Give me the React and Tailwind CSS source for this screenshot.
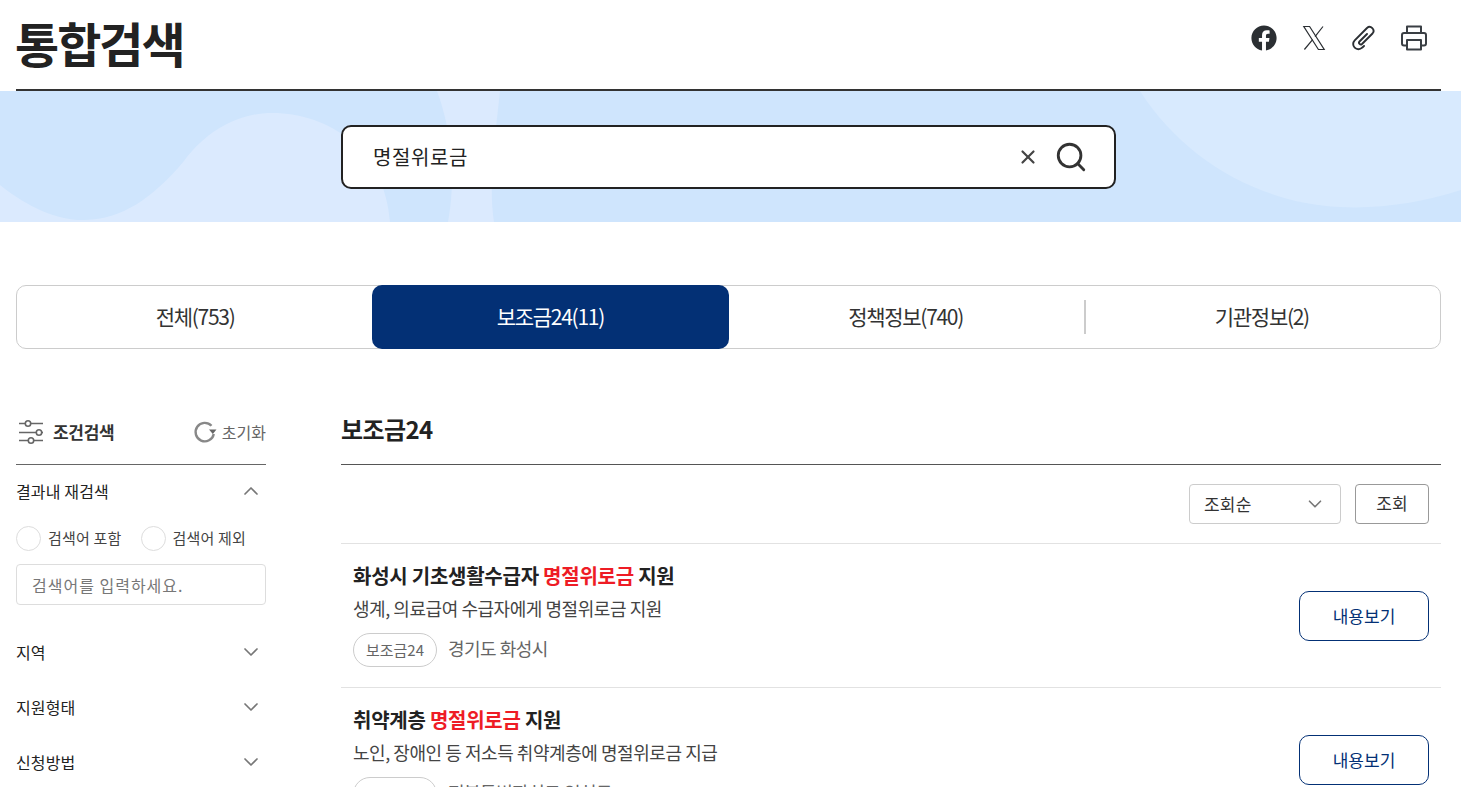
import React from 'react';
import { FaFacebook } from 'react-icons/fa';
import { X, Search, ChevronDown, ChevronUp } from 'lucide-react';

const FONT = 'font-["Noto_Sans_CJK_KR","Noto_Sans",sans-serif]';

const TABS = [
  { label: '전체', count: 753 },
  { label: '보조금24', count: 11, active: true },
  { label: '정책정보', count: 740 },
  { label: '기관정보', count: 2 },
];

const RESULTS = [
  { before: '화성시 기초생활수급자 ', desc: '생계, 의료급여 수급자에게 명절위로금 지원', region: '경기도 화성시' },
  { before: '취약계층 ', desc: '노인, 장애인 등 저소득 취약계층에 명절위로금 지급', region: '전북특별자치도 임실군' },
];

function XLogo() {
  return (
    <svg width="24" height="26" viewBox="0 0 24 26" fill="none" stroke="#2b2f33" strokeWidth="1.2">
      <path d="M1.8 1.5h5.8l14.6 23h-5.8z" />
      <path d="M21 1.5l-8 10.2M10.6 14.6L2.4 24.5" />
    </svg>
  );
}

function ClipIcon() {
  return (
    <svg width="26" height="26" viewBox="0 0 26 26" fill="none" stroke="#2b2f33" strokeWidth="1.9" strokeLinecap="round" strokeLinejoin="round">
      <path d="M16 9L8.500 16.500a1.770 1.770 0 0 0 2.500 2.500L21.500 8.500a3.900 3.900 0 0 0-5.500-5.500L3.700 15.300a5.200 5.200 0 0 0 7.400 7.400L13 21" />
    </svg>
  );
}

function PrinterIcon() {
  return (
    <svg width="26" height="26" viewBox="0 0 26 26" fill="none" stroke="#3a3f44" strokeWidth="2" strokeLinejoin="round">
      <path d="M6 8V1.5h14V8" />
      <path d="M6 20.5H3a2 2 0 0 1-2-2V10a2 2 0 0 1 2-2h20a2 2 0 0 1 2 2v8.500a2 2 0 0 1-2 2h-3" />
      <path d="M6 15h14v9.500H6z" />
    </svg>
  );
}

function FilterIcon() {
  return (
    <svg width="26" height="24" viewBox="0 0 26 24" fill="none" stroke="#666" strokeWidth="1.6" className="ml-[2px] mr-[9px]">
      <path d="M1 3.500h6M13 3.500h12M1 12.500h17M24 12.500h1M1 20.500h9M16 20.500h9" />
      <circle cx="10" cy="3.500" r="2.700" />
      <circle cx="21" cy="12.500" r="2.700" />
      <circle cx="13" cy="20.500" r="2.700" />
    </svg>
  );
}

function ResetIcon() {
  return (
    <svg width="24" height="24" viewBox="0 0 24 24" fill="none" className="mr-[5px]">
      <path d="M18.500 5.800A9.200 9.200 0 1 0 20.800 14" stroke="#888" strokeWidth="2.400" />
      <path d="M16 9.500h7.500l-3.700 4.500z" fill="#666" />
    </svg>
  );
}

function Header() {
  return (
    <div className="flex items-center justify-between h-[91px] ml-4 mr-5 border-b-2 border-[#333]">
      <h1 className="text-[48px] font-bold text-[#222] tracking-[-2px] leading-none -mt-[6px] -ml-px">통합검색</h1>
      <div className="flex items-center gap-6 pr-[14px] -mt-[14px] text-[#2b2f33]">
        <span className="flex justify-center w-[26px]"><FaFacebook size={26} /></span>
        <span className="flex justify-center w-[26px]"><XLogo /></span>
        <span className="flex justify-center w-[26px]"><ClipIcon /></span>
        <span className="flex justify-center w-[26px]"><PrinterIcon /></span>
      </div>
    </div>
  );
}

function SearchBand() {
  return (
    <div className="relative h-[131px] bg-[#cfe5fd] flex justify-center overflow-hidden">
      <svg className="absolute inset-0" width="1461" height="131" viewBox="0 0 1461 131">
        <path d="M0 94C30 118 60 130 85 129C122 128 152 108 184 70C208 38 240 22 272 22C330 22 385 60 390 131H0Z" fill="#dbeafe" />
        <path d="M437 0H500C496 40 488 90 494 131H448C456 90 452 40 437 0Z" fill="#dbeafe" />
        <path d="M1140 0H1461V99C1420 112 1380 118 1340 116C1260 112 1185 70 1140 0Z" fill="#d8eafe" />
      </svg>
      <div className="relative mt-[34px] ml-[-4px] flex items-center w-[775px] h-[64px] bg-white border-2 border-[#222] rounded-[10px] pl-[30px] pr-[26px]">
        <span className="flex-1 text-[20px] text-[#222] tracking-[0.6px]">명절위로금</span>
        <X size={22} strokeWidth={2.4} className="text-[#444] mr-[15px]" />
        <Search size={34} strokeWidth={2} className="text-[#333]" />
      </div>
    </div>
  );
}

function Tabs() {
  return (
    <div className="ml-4 mr-5 mt-[63px] h-[64px] flex border border-[#ccc] rounded-[10px]">
      {TABS.map((t, i) => (
        <div key={t.label} className={`flex-1 flex items-center justify-center text-[21px] tracking-[-1.3px] ${t.active ? 'bg-[#033075] text-white rounded-[10px] -my-px -mx-px' : 'text-[#333]'} ${i === 3 ? 'relative' : ''}`}>
          {i === 3 && <span className="absolute left-0 top-[14px] bottom-[14px] w-[2px] bg-[#ccc]" />}
          {t.label}({t.count})
        </div>
      ))}
    </div>
  );
}

function FilterRow({ label, open }) {
  const Icon = open ? ChevronUp : ChevronDown;
  return (
    <div className={`flex items-center justify-between h-[55px] text-[16px] text-[#222] tracking-[0.15px] ${open ? '-mt-[2px]' : ''}`}>
      {label}
      <Icon size={24} strokeWidth={1.7} className="text-[#777] mr-[3px]" />
    </div>
  );
}

function Sidebar() {
  return (
    <aside className="w-[250px] shrink-0">
      <div className="flex items-center h-[72px] pt-[6px] border-b border-[#666]">
        <FilterIcon />
        <span className="flex-1 text-[17px] font-bold text-[#333] tracking-[-0.3px]">조건검색</span>
        <ResetIcon />
        <span className="text-[16px] text-[#666]">초기화</span>
      </div>
      <FilterRow label="결과내 재검색" open />
      <div className="flex items-center h-[26px] mt-[7px] text-[15px] text-[#444] tracking-[0.2px]">
        <span className="w-[25px] h-[25px] rounded-full border border-[#ddd] mr-[7px]" />
        <span className="mr-[19px]">검색어 포함</span>
        <span className="w-[25px] h-[25px] rounded-full border border-[#ddd] mr-[7px]" />
        <span>검색어 제외</span>
      </div>
      <div className="flex items-center mt-[13px] mb-[19px] h-[41px] border border-[#ddd] rounded-[4px] pl-[15px] text-[16px] text-[#777] tracking-[1px]">검색어를 입력하세요.</div>
      <FilterRow label="지역" />
      <FilterRow label="지원형태" />
      <FilterRow label="신청방법" />
    </aside>
  );
}

function ResultItem({ item }) {
  return (
    <div className="flex items-center justify-between h-[144px] border-t border-[#e2e2e2] pl-3 pr-3">
      <div className="flex flex-col self-start pt-[18px]">
        <div className="text-[20px] leading-[28px] font-bold text-[#222] tracking-[-0.25px]">
          {item.before}<span className="text-[#ee1c25]">명절위로금</span> 지원
        </div>
        <div className="text-[18px] leading-[28px] mt-[4px] text-[#444] tracking-[-0.45px]">{item.desc}</div>
        <div className="flex items-center gap-[11px] mt-[11px]">
          <span className="flex items-center justify-center w-[84px] h-[34px] rounded-full border border-[#ccc] text-[15px] text-[#666]">보조금24</span>
          <span className="text-[18px] text-[#666] tracking-[-0.5px] -mt-[3px]">{item.region}</span>
        </div>
      </div>
      <button className="w-[130px] h-[50px] rounded-[10px] border border-[#033075] text-[17px] text-[#033075]">내용보기</button>
    </div>
  );
}

export default function App() {
  return (
    <div className={`h-[787px] overflow-hidden bg-white ${FONT}`}>
      <Header />
      <SearchBand />
      <Tabs />
      <div className="flex gap-[75px] ml-4 mr-5 mt-[44px]">
        <Sidebar />
        <main className="flex-1 min-w-0">
          <div className="flex items-center h-[72px] border-b border-[#555] text-[24px] font-bold text-[#222] tracking-[-0.6px]">보조금24</div>
          <div className="flex justify-end gap-[14px] h-[78px] pt-[19px] pr-3">
            <div className="flex items-center justify-between w-[152px] h-[40px] border border-[#ccc] rounded-[4px] pl-[14px] pr-[14px] text-[17px] text-[#333] tracking-[0.2px]">
              조회순
              <ChevronDown size={22} strokeWidth={1.8} className="text-[#777]" />
            </div>
            <button className="w-[74px] h-[40px] border border-[#999] rounded-[4px] text-[17px] text-[#333] pb-[2px]">조회</button>
          </div>
          {RESULTS.map(r => <ResultItem key={r.before} item={r} />)}
        </main>
      </div>
    </div>
  );
}
